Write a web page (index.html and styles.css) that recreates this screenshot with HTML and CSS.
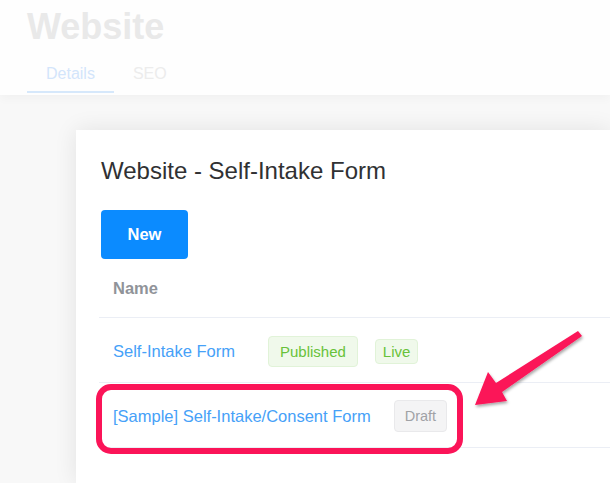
FILE: index.html
```html
<!DOCTYPE html>
<html>
<head>
<meta charset="utf-8">
<link rel="stylesheet" href="styles.css">
</head>
<body>
<header class="page-header">
  <h1 class="page-title">Website</h1>
  <nav class="tabs">
    <span class="tab tab-active">Details</span>
    <span class="tab">SEO</span>
  </nav>
</header>
<main class="backdrop">
  <section class="card">
    <h2 class="card-title">Website - Self-Intake Form</h2>
    <button class="btn-new">New</button>
    <div class="table">
      <div class="row row-head"><span class="col-name">Name</span></div>
      <div class="row">
        <a class="link">Self-Intake Form</a>
        <span class="tag tag-success tag-lg">Published</span>
        <span class="tag tag-success tag-sm">Live</span>
      </div>
      <div class="row">
        <a class="link">[Sample] Self-Intake/Consent Form</a>
        <span class="tag tag-info tag-draft">Draft</span>
      </div>
    </div>
  </section>
</main>
<svg class="annotation" width="610" height="483" viewBox="0 0 610 483">
  <defs>
    <filter id="sh" x="-20%" y="-20%" width="140%" height="140%">
      <feDropShadow dx="1" dy="2" stdDeviation="1.5" flood-color="#000" flood-opacity="0.35"/>
    </filter>
  </defs>
  <rect x="99" y="387" width="361" height="64" rx="12" ry="12" fill="none" stroke="#fb1458" stroke-width="6"/>
  <polygon filter="url(#sh)" fill="#fb1458" points="578,331 496,383 488,372 475,405 507,401 502,392 582,336"/>
</svg>
</body>
</html>
```
FILE: styles.css
```css
html, body {
  margin: 0;
  padding: 0;
}
body {
  width: 610px;
  height: 483px;
  overflow: hidden;
  position: relative;
  font-family: "Liberation Sans", Arial, sans-serif;
  background: #f8f8f8;
}
.page-header {
  height: 95px;
  box-sizing: border-box;
  padding: 9px 0 0 27px;
  background: #fefefe;
  box-shadow: 0 3px 10px rgba(0,0,0,0.035);
  position: relative;
  z-index: 1;
}
.page-title {
  margin: 0;
  font-size: 36px;
  line-height: 36px;
  font-weight: bold;
  color: #e9e9e9;
}
.tabs {
  display: flex;
  margin-top: 11px;
}
.tab {
  font-size: 16px;
  line-height: 35px;
  padding: 0 19px;
  color: #ececec;
  border-bottom: 2px solid transparent;
}
.tab-active {
  color: #d3e5fb;
  border-bottom-color: #d6e8fb;
}
.backdrop {
  padding: 35px 0 0 76px;
}
.card {
  width: 534px;
  height: 353px;
  box-sizing: border-box;
  background: #fff;
  padding: 27px 0 0 25px;
  box-shadow: 0 0 22px rgba(0,0,0,0.09);
}
.card-title {
  margin: 0;
  font-size: 24px;
  line-height: 28px;
  font-weight: normal;
  color: #303133;
}
.btn-new {
  display: block;
  margin-top: 25px;
  width: 87px;
  height: 49px;
  border: none;
  border-radius: 4px;
  background: #0b8bff;
  color: #fff;
  font-family: "Liberation Sans", Arial, sans-serif;
  font-weight: bold;
  font-size: 16.5px;
  padding: 0;
}
.table {
  margin-left: -2px;
}
.row {
  display: flex;
  align-items: center;
  height: 64px;
  padding: 2px 0 0 14px;
  box-sizing: border-box;
  height: 65px;
  border-bottom: 1px solid #ebeef5;
}
.row-head {
  height: 59px;
  padding-top: 1px;
}
.col-name {
  font-size: 16.5px;
  font-weight: bold;
  color: #909399;
}
.link {
  font-size: 16.5px;
  color: #46a1f8;
}
.tag {
  box-sizing: border-box;
  display: inline-flex;
  align-items: center;
  border: 1px solid;
  border-radius: 4px;
}
.tag-success {
  background: #f0f9eb;
  border-color: #e1f3d8;
  color: #67c23a;
  font-size: 15px;
}
.tag-lg {
  height: 31px;
  padding: 0 11px;
  margin-left: 33px;
}
.tag-sm {
  height: 25px;
  padding: 0 7px;
  margin-left: 17px;
}
.tag-info {
  background: #f4f4f5;
  border-color: #e9e9eb;
  color: #a0a2a6;
}
.tag-draft {
  height: 32px;
  padding: 0 10px;
  margin-left: 23px;
  font-size: 14.5px;
}
.annotation {
  position: absolute;
  left: 0;
  top: 0;
  z-index: 5;
}
```
